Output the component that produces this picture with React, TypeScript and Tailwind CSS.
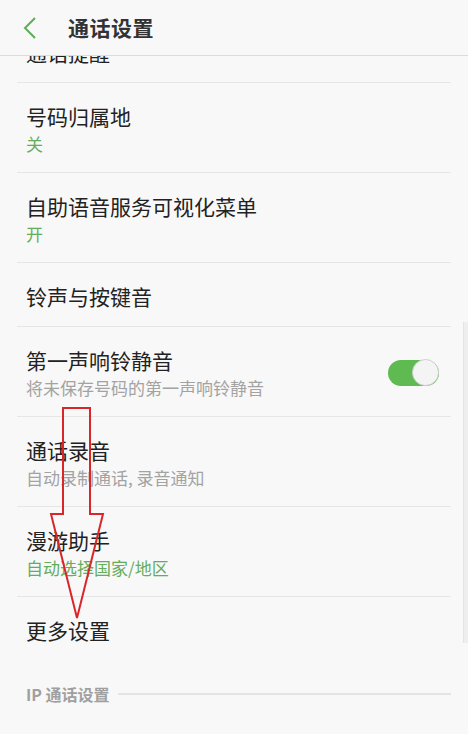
import React from "react";

type Row = {
  title: string;
  sub?: string;
  subGreen?: boolean;
  toggle?: boolean;
};

const rows: Row[] = [
  { title: "通话提醒" },
  { title: "号码归属地", sub: "关", subGreen: true },
  { title: "自助语音服务可视化菜单", sub: "开", subGreen: true },
  { title: "铃声与按键音" },
  { title: "第一声响铃静音", sub: "将未保存号码的第一声响铃静音", toggle: true },
  { title: "通话录音", sub: "自动录制通话, 录音通知" },
  { title: "漫游助手", sub: "自动选择国家/地区", subGreen: true },
];

function Toggle() {
  return (
    <div className="w-[51px] h-[26px] rounded-full bg-[#5fba52] flex items-center justify-end">
      <div className="w-[27px] h-[27px] rounded-full bg-[#f4f4f4] border border-[#cfcfcf]" />
    </div>
  );
}

function SettingRow({ row }: { row: Row }) {
  const twoLine = !!row.sub;
  return (
    <div
      className={`mx-[17px] border-b border-[#e6e6e6] flex items-center ${
        twoLine ? "h-[90px]" : "h-[64px]"
      }`}
    >
      <div className="flex-1 pl-[9px] pt-[2px]">
        <div className="text-[21px] leading-[28px] text-[#222]">{row.title}</div>
        {row.sub && (
          <div
            className={`text-[17px] leading-[25px] mt-[1px] ${
              row.subGreen ? "text-[#64ad5c]" : "text-[#a3a3a3]"
            }`}
          >
            {row.sub}
          </div>
        )}
      </div>
      {row.toggle && (
        <div className="pr-[12px] pt-[2px]">
          <Toggle />
        </div>
      )}
    </div>
  );
}

export default function App() {
  return (
    <div
      className="relative w-[468px] h-[734px] bg-[#f8f8f8] flex flex-col overflow-hidden"
      style={{ fontFamily: '"Noto Sans CJK SC", "Noto Sans", sans-serif' }}
    >
      <header className="relative z-10 h-[56px] shrink-0 bg-[#f8f8f8] border-b border-[#dcdcdc] flex items-center">
        <svg width="16" height="24" viewBox="0 0 16 24" className="ml-[22px]">
          <path d="M13 2 L3 12 L13 22" fill="none" stroke="#5cae57" strokeWidth="2" />
        </svg>
        <div className="ml-[30px] text-[21px] font-bold text-[#333] leading-none tracking-[0.5px]">通话设置</div>
      </header>

      <div className="flex-1 overflow-hidden">
        <div className="-mt-[37px]">
          {rows.map((r) => (
            <SettingRow key={r.title} row={r} />
          ))}
          <div className="mx-[17px] h-[64px] flex items-center">
            <div className="pl-[9px] pt-[2px] text-[21px] leading-[28px] text-[#222]">更多设置</div>
          </div>
          <div className="mx-[17px] h-[66px] flex items-center gap-[8px]">
            <div className="pl-[9px] text-[16px] font-bold text-[#a0a0a0] whitespace-nowrap">IP 通话设置</div>
            <div className="flex-1 h-[2px] bg-[#e4e4e4]" />
          </div>
        </div>
      </div>

      {/* scrollbar */}
      <div className="absolute right-0 top-[322px] w-[5px] h-[321px] bg-[#eeeeee] border-l border-[#e4e4e4]" />

      {/* red annotation arrow */}
      <svg
        className="absolute left-0 top-0 pointer-events-none"
        width="468"
        height="734"
        viewBox="0 0 468 734"
      >
        <path
          d="M63 408 L90 408 L90 514 L103 514 L77 618 L51 514 L63 514 Z"
          fill="none"
          stroke="#d8262b"
          strokeWidth="2"
          strokeLinejoin="miter"
        />
      </svg>
    </div>
  );
}
